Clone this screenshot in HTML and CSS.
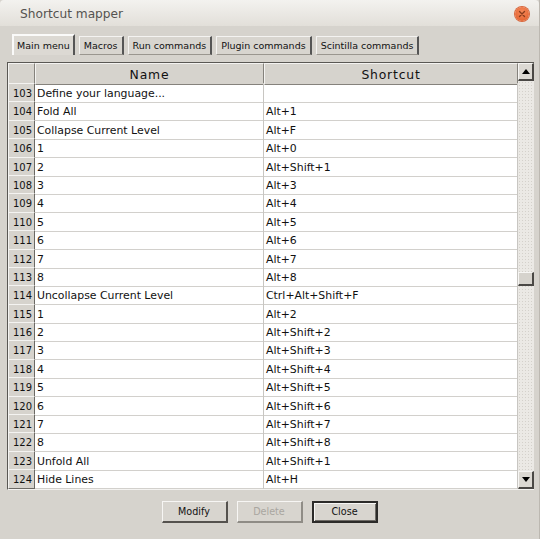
FILE: index.html
```html
<!DOCTYPE html>
<html>
<head>
<meta charset="utf-8">
<link rel="stylesheet" href="styles.css">
</head>
<body>
<div class="window">
  <div class="titlebar">
    <span class="title">Shortcut mapper</span>
    <span class="close-btn"><svg width="14" height="14" viewBox="0 0 14 14"><path d="M4.5 4.5 L9.5 9.5 M9.5 4.5 L4.5 9.5" stroke="#8a3c1c" stroke-width="1.4" stroke-linecap="round"/></svg></span>
  </div>
  <div class="tabs">
    <div class="tab active">Main menu</div>
    <div class="tab">Macros</div>
    <div class="tab">Run commands</div>
    <div class="tab">Plugin commands</div>
    <div class="tab">Scintilla commands</div>
  </div>
  <div class="grid-box">
    <div class="grid">
      <div class="hrow">
        <div class="hcell corner"></div>
        <div class="hcell">Name</div>
        <div class="hcell">Shortcut</div>
      </div>
      <div class="row"><div class="num">103</div><div class="cell">Define your language...</div><div class="cell"></div></div>
      <div class="row"><div class="num">104</div><div class="cell">Fold All</div><div class="cell">Alt+1</div></div>
      <div class="row"><div class="num">105</div><div class="cell">Collapse Current Level</div><div class="cell">Alt+F</div></div>
      <div class="row"><div class="num">106</div><div class="cell">1</div><div class="cell">Alt+0</div></div>
      <div class="row"><div class="num">107</div><div class="cell">2</div><div class="cell">Alt+Shift+1</div></div>
      <div class="row"><div class="num">108</div><div class="cell">3</div><div class="cell">Alt+3</div></div>
      <div class="row"><div class="num">109</div><div class="cell">4</div><div class="cell">Alt+4</div></div>
      <div class="row"><div class="num">110</div><div class="cell">5</div><div class="cell">Alt+5</div></div>
      <div class="row"><div class="num">111</div><div class="cell">6</div><div class="cell">Alt+6</div></div>
      <div class="row"><div class="num">112</div><div class="cell">7</div><div class="cell">Alt+7</div></div>
      <div class="row"><div class="num">113</div><div class="cell">8</div><div class="cell">Alt+8</div></div>
      <div class="row"><div class="num">114</div><div class="cell">Uncollapse Current Level</div><div class="cell">Ctrl+Alt+Shift+F</div></div>
      <div class="row"><div class="num">115</div><div class="cell">1</div><div class="cell">Alt+2</div></div>
      <div class="row"><div class="num">116</div><div class="cell">2</div><div class="cell">Alt+Shift+2</div></div>
      <div class="row"><div class="num">117</div><div class="cell">3</div><div class="cell">Alt+Shift+3</div></div>
      <div class="row"><div class="num">118</div><div class="cell">4</div><div class="cell">Alt+Shift+4</div></div>
      <div class="row"><div class="num">119</div><div class="cell">5</div><div class="cell">Alt+Shift+5</div></div>
      <div class="row"><div class="num">120</div><div class="cell">6</div><div class="cell">Alt+Shift+6</div></div>
      <div class="row"><div class="num">121</div><div class="cell">7</div><div class="cell">Alt+Shift+7</div></div>
      <div class="row"><div class="num">122</div><div class="cell">8</div><div class="cell">Alt+Shift+8</div></div>
      <div class="row"><div class="num">123</div><div class="cell">Unfold All</div><div class="cell">Alt+Shift+1</div></div>
      <div class="row"><div class="num">124</div><div class="cell">Hide Lines</div><div class="cell">Alt+H</div></div>
    </div>
    <div class="scrollbar">
      <div class="sbtn"><svg width="8" height="5" viewBox="0 0 8 5"><path d="M4 0 L8 5 L0 5 Z" fill="#000"/></svg></div>
      <div class="track">
        <div class="thumb"></div>
      </div>
      <div class="sbtn"><svg width="8" height="5" viewBox="0 0 8 5"><path d="M0 0 L8 0 L4 5 Z" fill="#000"/></svg></div>
    </div>
  </div>
  <div class="buttons">
    <div class="btn">Modify</div>
    <div class="btn disabled">Delete</div>
    <div class="btn default">Close</div>
  </div>
</div>
</body>
</html>
```

FILE: styles.css
```css
html, body {
  margin: 0;
  padding: 0;
  background: #d6d3cd;
}
.window {
  width: 540px;
  height: 539px;
  background: #d6d3cd;
  font-family: "DejaVu Sans", sans-serif;
  display: flex;
  flex-direction: column;
  overflow: hidden;
  box-sizing: border-box;
  border-right: 1px solid #bcb8b1;
}
.titlebar {
  height: 26px;
  flex: none;
  display: flex;
  align-items: center;
  justify-content: space-between;
  padding: 0 10px 0 20px;
  background: linear-gradient(#f3f2ef, #e2dfd9);
  border-top-left-radius: 4px;
  border-top-right-radius: 4px;
}
.title {
  font-size: 12.2px;
  color: #555350;
  padding-top: 1px;
}
.close-btn {
  width: 14px;
  height: 14px;
  border-radius: 50%;
  background: radial-gradient(circle at 50% 35%, #f5895a, #e05a26);
  box-shadow: 0 0 0 1px #d9653a;
  display: flex;
  align-items: center;
  justify-content: center;
  margin-top: 2px;
}
.tabs {
  display: flex;
  align-items: flex-end;
  gap: 4px;
  padding: 8px 0 0 12px;
  height: 21px;
  flex: none;
}
.tab {
  font-size: 9.5px;
  color: #111;
  height: 19px;
  line-height: 18px;
  padding: 0 4px 0 4px;
  box-sizing: border-box;
  border-top: 1px solid #f4f3f1;
  border-left: 1px solid #f4f3f1;
  border-right: 2px solid #555;
  border-bottom: 1px solid #9a968f;
  background: #d8d5cf;
}
.tab.active {
  height: 21px;
  line-height: 19px;
  padding: 0 3px 0 3px;
  border-bottom: none;
  border-top: 2px solid #fafaf9;
  border-left: 2px solid #fafaf9;
  background: #dcd9d3;
}
.grid-box {
  margin: 7px 0 0 7px;
  width: 527px;
  height: 428px;
  flex: none;
  box-sizing: border-box;
  border-top: 1px solid #5a5854;
  border-left: 1px solid #5a5854;
  border-bottom: 1px solid #f4f3f1;
  display: flex;
  background: #fff;
}
.grid {
  width: 510px;
  display: flex;
  flex-direction: column;
}
.hrow {
  display: grid;
  grid-template-columns: 27px 229px 254px;
  height: 20px;
  flex: none;
}
.hcell {
  background: #d6d3cd;
  box-sizing: border-box;
  border-top: 1px solid #f4f3f1;
  border-left: 1px solid #f4f3f1;
  border-right: 1px solid #85827c;
  border-bottom: 1px solid #85827c;
  font-size: 12.4px;
  letter-spacing: 0.8px;
  color: #111;
  text-align: center;
  line-height: 19px;
  padding-top: 1px;
}
.row {
  display: grid;
  grid-template-columns: 27px 229px 254px;
  height: 18.4px;
  flex: none;
}
.num {
  background: #d6d3cd;
  box-sizing: border-box;
  border-top: 1px solid #f4f3f1;
  border-left: 1px solid #f4f3f1;
  border-right: 1px solid #6b6964;
  border-bottom: 1px solid #6b6964;
  font-size: 10px;
  text-align: right;
  padding-right: 2px;
  padding-top: 1px;
  line-height: 17px;
  color: #111;
}
.cell {
  box-sizing: border-box;
  border-bottom: 1px solid #d2d0cc;
  border-right: 1px solid #c8c6c2;
  font-size: 10.9px;
  color: #111;
  padding-left: 2px;
  padding-top: 2px;
  line-height: 17px;
  white-space: nowrap;
  overflow: hidden;
}
.scrollbar {
  width: 16px;
  display: flex;
  flex-direction: column;
  background-color: #ebe9e5;
  background-image: radial-gradient(#d4d1cb 0.6px, transparent 0.7px);
  background-size: 3px 3px;
}
.sbtn {
  height: 18px;
  flex: none;
  box-sizing: border-box;
  background: #dcd9d3;
  border-top: 1px solid #f7f6f4;
  border-left: 1px solid #f7f6f4;
  border-right: 2px solid #4a4845;
  border-bottom: 2px solid #4a4845;
  display: flex;
  align-items: center;
  justify-content: center;
}
.track {
  flex: 1;
  padding-top: 191px;
}
.thumb {
  height: 14px;
  box-sizing: border-box;
  background: #d6d3cd;
  border-top: 1px solid #f7f6f4;
  border-left: 1px solid #f7f6f4;
  border-right: 2px solid #4a4845;
  border-bottom: 2px solid #4a4845;
}
.buttons {
  display: flex;
  justify-content: center;
  gap: 9px;
  margin-top: 11px;
}
.btn {
  width: 66px;
  height: 22px;
  box-sizing: border-box;
  font-size: 9.6px;
  color: #111;
  text-align: center;
  line-height: 19px;
  background: #d8d5cf;
  border-top: 1px solid #f7f6f4;
  border-left: 1px solid #f7f6f4;
  border-right: 2px solid #55524e;
  border-bottom: 2px solid #55524e;
}
.btn.disabled {
  color: #a9a6a0;
  border-right-color: #8f8c86;
  border-bottom-color: #8f8c86;
}
.btn.default {
  border: 2px solid #2c2b29;
  box-shadow: inset 1px 1px 0 #f7f6f4, inset -1px -1px 0 #6e6b66;
  line-height: 18px;
}
```
